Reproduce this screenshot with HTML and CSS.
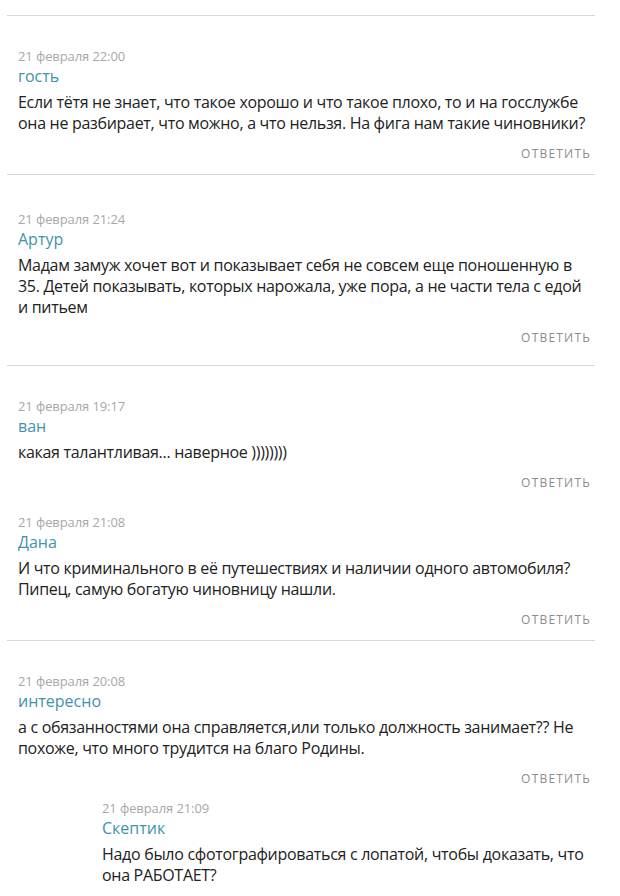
FILE: index.html
```html
<!DOCTYPE html>
<html lang="ru">
<head>
  <meta charset="UTF-8">
  <meta name="viewport" content="width=device-width, initial-scale=1.0">
  <title>Комментарии</title>
  <link rel="stylesheet" href="styles.css">
</head>
<body>

  <div class="comments">

    <!-- Ветка 1 -->
    <div class="thread">
      <div class="comment">
        <div class="date">21 февраля 22:00</div>
        <div class="author">гость</div>
        <div class="text">Если тётя не знает, что такое хорошо и что такое плохо, то и на госслужбе она не разбирает, что можно, а что нельзя. На фига нам такие чиновники?</div>
        <div class="reply"><a href="#">Ответить</a></div>
      </div>
    </div>

    <!-- Ветка 2 -->
    <div class="thread tall">
      <div class="comment">
        <div class="date">21 февраля 21:24</div>
        <div class="author">Артур</div>
        <div class="text">Мадам замуж хочет вот и показывает себя не совсем еще поношенную в 35. Детей показывать, которых нарожала, уже пора, а не части тела с едой и питьем</div>
        <div class="reply"><a href="#">Ответить</a></div>
      </div>
    </div>

    <!-- Ветка 3 -->
    <div class="thread">
      <div class="comment">
        <div class="date">21 февраля 19:17</div>
        <div class="author">ван</div>
        <div class="text">какая талантливая... наверное ))))))))</div>
        <div class="reply"><a href="#">Ответить</a></div>
      </div>
      <div class="comment">
        <div class="date">21 февраля 21:08</div>
        <div class="author">Дана</div>
        <div class="text">И что криминального в её путешествиях и наличии одного автомобиля? Пипец, самую богатую чиновницу нашли.</div>
        <div class="reply"><a href="#">Ответить</a></div>
      </div>
    </div>

    <!-- Ветка 4 -->
    <div class="thread">
      <div class="comment">
        <div class="date">21 февраля 20:08</div>
        <div class="author">интересно</div>
        <div class="text">а с обязанностями она справляется,или только должность занимает?? Не похоже, что много трудится на благо Родины.</div>
        <div class="reply"><a href="#">Ответить</a></div>
      </div>
      <div class="comment answer">
        <div class="date">21 февраля 21:09</div>
        <div class="author">Скептик</div>
        <div class="text">Надо было сфотографироваться с лопатой, чтобы доказать, что она РАБОТАЕТ?</div>
      </div>
    </div>

  </div>

</body>
</html>
```

FILE: styles.css
```css
* {
  box-sizing: border-box;
}

body {
  margin: 0;
  font-family: 'Open Sans', 'Noto Sans', sans-serif;
  background: #fff;
  color: #222;
}

.comments {
  width: 588px;
  margin: 15px 0 0 7px;
}

.thread {
  border-top: 1px solid #d6d6d6;
  padding: 31px 4px 12px 11px;
}

.thread.tall {
  padding-top: 35px;
  padding-bottom: 19px;
}

.comment + .comment {
  margin-top: 22px;
}

.comment.answer {
  margin-top: 12px;
  margin-left: 84px;
}

.date {
  font-size: 13px;
  line-height: 19px;
  letter-spacing: -0.1px;
  color: #a8a8a8;
}

.author {
  font-size: 16px;
  line-height: 20px;
  color: #3f93ad;
}

.text {
  max-width: 574px;
  margin-top: 6px;
  margin-right: -4px;
  font-size: 16px;
  line-height: 21px;
  letter-spacing: -0.3px;
}

.reply {
  margin-top: 12px;
  text-align: right;
  font-size: 12px;
  line-height: 16px;
}

.reply a {
  color: #8c8c8c;
  text-decoration: none;
  text-transform: uppercase;
  letter-spacing: 1.2px;
}
```
